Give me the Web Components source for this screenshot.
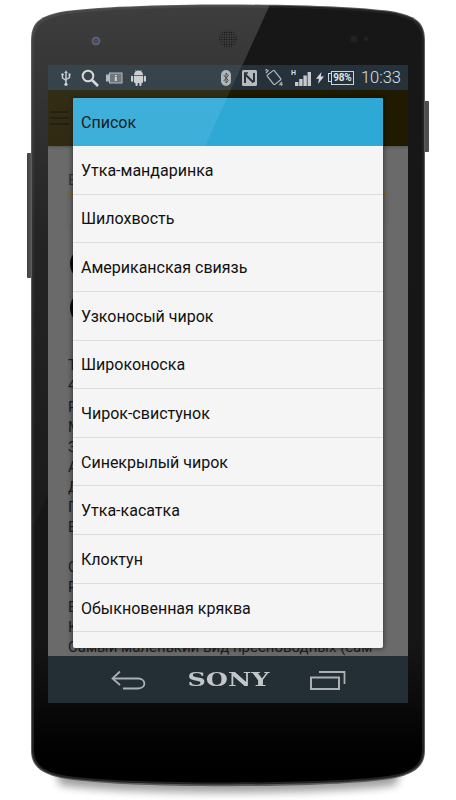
<!DOCTYPE html>
<html lang="ru">
<head>
<meta charset="utf-8">
<title>Список</title>
<style>
  html, body { margin: 0; background: #fff; }
  body { font-family: Roboto, "Liberation Sans", sans-serif; }
</style>
</head>
<body>

<phone-frame>
  <status-bar></status-bar>
  <app-page>
    <list-dialog title-text="Список">
      <list-item>Утка-мандаринка</list-item>
      <list-item>Шилохвость</list-item>
      <list-item>Американская свиязь</list-item>
      <list-item>Узконосый чирок</list-item>
      <list-item>Широконоска</list-item>
      <list-item>Чирок-свистунок</list-item>
      <list-item>Синекрылый чирок</list-item>
      <list-item>Утка-касатка</list-item>
      <list-item>Клоктун</list-item>
      <list-item>Обыкновенная кряква</list-item>
      <list-item></list-item>
    </list-dialog>
  </app-page>
  <nav-bar></nav-bar>
</phone-frame>

<script>
// Device body: drawn svg behind, glare svg in front, the screen sits in flow
class PhoneFrame extends HTMLElement {
  constructor() {
    super();
    this.attachShadow({ mode: 'open' }).innerHTML = `
    <style>
      :host { display: block; position: relative; width: 456px; height: 800px; overflow: hidden; }
      .body, .glare { position: absolute; left: 0; top: 0; }
      .glare { pointer-events: none; }
      .wrap { position: relative; box-sizing: border-box; height: 800px; padding: 65px 48px 0; }
      .screen { display: grid; grid-template-rows: 25px 566px 47px; width: 360px; height: 638px; overflow: hidden; }
    </style>
    <svg class="body" width="456" height="800" viewBox="0 0 456 800">
      <defs>
        <linearGradient id="fill" x1="0" y1="0" x2="0" y2="1">
          <stop offset="0" stop-color="#171717"/>
          <stop offset=".82" stop-color="#161616"/>
          <stop offset=".95" stop-color="#020202"/>
          <stop offset="1" stop-color="#000"/>
        </linearGradient>
        <linearGradient id="sheen" gradientUnits="userSpaceOnUse" x1="0" y1="0" x2="0" y2="520">
          <stop offset="0" stop-color="#fff" stop-opacity=".17"/>
          <stop offset=".45" stop-color="#fff" stop-opacity=".06"/>
          <stop offset="1" stop-color="#fff" stop-opacity=".02"/>
        </linearGradient>
        <linearGradient id="btn" x1="0" y1="0" x2="1" y2="0">
          <stop offset="0" stop-color="#3c3c3c"/>
          <stop offset="1" stop-color="#666"/>
        </linearGradient>
        <filter id="soft" x="-10%" y="-20%" width="120%" height="140%"><feGaussianBlur stdDeviation="4"/></filter>
        <clipPath id="shape"><path d="M32 42C32 24 39 18 60 13C120 3 336 3 396 13C417 18 424 24 424 42L424 750C424 765 415 772 395 777C340 787 116 787 61 777C41 772 32 765 32 750Z"/></clipPath>
        <radialGradient id="lens"><stop offset="0" stop-color="#4d68d0"/><stop offset=".4" stop-color="#333c5c"/><stop offset=".7" stop-color="#6b6b6b"/><stop offset="1" stop-color="#555"/></radialGradient>
        <pattern id="mesh" width="2.4" height="2.4" patternUnits="userSpaceOnUse"><circle cx="1.2" cy="1.2" r=".65" fill="#0d0d0d"/></pattern>
      </defs>
      <path d="M50 750L406 750L396 785C330 795 126 795 60 785Z" fill="#000" opacity=".38" filter="url(#soft)"/>
      <rect x="27" y="153" width="6" height="125" rx="1" fill="url(#btn)"/>
      <rect x="424" y="101" width="5" height="51" rx="1" fill="#4e4e4e"/>
      <path d="M31 42C31 23 38 17 60 12C120 2 336 2 396 12C418 17 425 23 425 42L425 750C425 766 416 773 395 778C340 789 116 789 61 778C40 773 31 766 31 750Z" fill="#5b5b5b"/>
      <path d="M32 42C32 24 39 18 60 13C120 3 336 3 396 13C417 18 424 24 424 42L424 750C424 765 415 772 395 777C340 787 116 787 61 777C41 772 32 765 32 750Z" fill="#232323"/>
      <path d="M34 43C34 26 41 20 61 15C120 5 336 5 395 15C415 20 422 26 422 43L422 750C422 763 414 771 394 775C340 785 116 785 62 775C42 771 34 763 34 750Z" fill="url(#fill)"/>
      <polygon points="31,0 272,0 0,600 31,600" fill="url(#sheen)" clip-path="url(#shape)"/>
      <circle cx="96" cy="41" r="4.5" fill="url(#lens)"/>
      <circle cx="228" cy="39" r="10" fill="#3a3a3a"/>
      <circle cx="228" cy="39" r="9" fill="url(#mesh)"/>
      <circle cx="354" cy="39" r="3.5" fill="#222"/>
      <circle cx="366" cy="39" r="2" fill="#242424"/>
    </svg>
    <div class="wrap"><div class="screen"><slot></slot></div></div>
    <svg class="glare" width="456" height="800" viewBox="0 0 456 800">
      <defs>
        <linearGradient id="g" gradientUnits="userSpaceOnUse" x1="0" y1="65" x2="0" y2="150">
          <stop offset="0" stop-color="#fff" stop-opacity=".09"/>
          <stop offset=".95" stop-color="#fff" stop-opacity=".07"/>
          <stop offset="1" stop-color="#fff" stop-opacity="0"/>
        </linearGradient>
      </defs>
      <polygon points="48,65 242,65 205,146 48,146" fill="url(#g)"/>
    </svg>`;
  }
}

// Top status bar with notification and system icons
class StatusBar extends HTMLElement {
  constructor() {
    super();
    this.attachShadow({ mode: 'open' }).innerHTML = `
    <style>
      :host { display: flex; align-items: center; justify-content: space-between; background: #25323b; color: #c9cdd0; height: 25px; padding: 0 7px 0 13px; box-sizing: border-box; }
      .group { display: flex; align-items: center; }
      svg { display: block; flex: none; }
      .net { display: flex; align-items: flex-start; width: 20px; height: 16px; }
      .h { font: 700 7px/7px Roboto, sans-serif; width: 5px; color: #d8dbdd; }
      .net svg { margin-left: -1px; }
      .battery { display: flex; align-items: center; margin-left: 4px; }
      .nub { width: 2px; height: 7px; border: 1px solid #cfd3d5; border-right: 0; }
      .cell { box-sizing: border-box; width: 23px; height: 14px; border: 1px solid #cfd3d5; font: 700 10px/12px Roboto, sans-serif; text-align: center; color: #dfe2e4; letter-spacing: -.2px; }
      .time { margin-left: 7px; font: 300 16.5px/25px Roboto, sans-serif; color: #dde0e2; }
    </style>
    <div class="group">
      <svg width="10" height="16" viewBox="0 0 10 16" fill="none" stroke="#c9cdd0" stroke-width="1.4"><path d="M5 2.5V15"/><path d="M5 0.5L6.8 3H3.2Z" fill="#c9cdd0" stroke="none"/><path d="M1.5 5V8L5 10.5M8.5 5V7.5L5 9.5"/><circle cx="1.5" cy="4.5" r="1.2" fill="#c9cdd0" stroke="none"/><rect x="7.5" y="3.5" width="2" height="2" fill="#c9cdd0" stroke="none"/><circle cx="5" cy="14.3" r="1.6" fill="#c9cdd0" stroke="none"/></svg>
      <svg style="margin-left:10px" width="18" height="18" viewBox="0 0 18 18" fill="none" stroke="#d3d6d8"><circle cx="7" cy="7" r="5.3" stroke-width="2"/><path d="M11 11L17 17" stroke-width="2.6"/></svg>
      <svg style="margin-left:6px" width="18" height="12" viewBox="0 0 18 12"><path d="M1 2.5H4V0.5H17.5V11.5H4V9.5H1Z" fill="#aeb3b6"/><rect x="5" y="1.5" width="11.500" height="9" fill="#606a70"/><rect x="9.8" y="3" width="2" height="1.4" fill="#ccd0d2"/><rect x="9.8" y="5" width="2" height="4" fill="#ccd0d2"/></svg>
      <svg style="margin-left:8px" width="15" height="17" viewBox="0 0 15 17" fill="#c8cbcd"><path d="M3 6A4.500 4.500 0 0 1 12 6Z"/><path d="M4.500 1.300L5.700 3M10.500 1.300L9.300 3" stroke="#c8cbcd" stroke-width=".8"/><path d="M3 6.800H12V13A1 1 0 0 1 11 14H4A1 1 0 0 1 3 13Z"/><rect x="0" y="6.800" width="2.200" height="6" rx="1.100"/><rect x="12.800" y="6.800" width="2.200" height="6" rx="1.100"/><rect x="4.500" y="13" width="2.200" height="4" rx="1.100"/><rect x="8.300" y="13" width="2.200" height="4" rx="1.100"/></svg>
    </div>
    <div class="group">
      <svg width="10" height="16" viewBox="0 0 10 16"><rect x="0" y="0" width="10" height="16" rx="5" fill="#a9aeb1"/><path d="M2.700 5L7.300 10.500L5 13V3L7.300 5.500L2.700 11" fill="none" stroke="#333c42" stroke-width="1"/></svg>
      <svg style="margin-left:11px" width="15" height="16" viewBox="0 0 15 16"><rect width="15" height="16" rx="1.500" fill="#b7bbbd"/><path d="M3 13V4.200L11.500 12.500M12 3V12" fill="none" stroke="#28333a" stroke-width="2"/><path d="M3 3H6" stroke="#28333a" stroke-width="1.500"/></svg>
      <svg style="margin-left:8px" width="18" height="17" viewBox="0 0 18 17" fill="none" stroke="#b4b9bc" stroke-width="1.200"><rect x="4.500" y="2.500" width="9" height="12" rx="1" transform="rotate(-38 9 8.500)"/><path d="M1 4L3.500 1M0.500 1.500L2 0M14.500 16L17 13M16 16.500L17.500 15"/></svg>
      <div class="net" style="margin-left:8px"><span class="h">H</span><svg width="16" height="14" viewBox="0 0 16 14" fill="#c6cacc" style="margin-top:2px"><rect x="0" y="10" width="3.400" height="4"/><rect x="4.200" y="7" width="3.400" height="7"/><rect x="8.400" y="3.500" width="3.400" height="10.500"/><rect x="12.600" y="0" width="3.400" height="14"/></svg></div>
      <svg style="margin-left:5px" width="8" height="12" viewBox="0 0 8 12" fill="#d4d7d9"><path d="M5.500 0L0 6.800H3L2 12L8 4.600H4.800Z"/></svg>
      <div class="battery"><span class="nub"></span><span class="cell">98%</span></div>
      <span class="time">10:33</span>
    </div>`;
  }
}

// The dimmed screen under the dialog, only its left edge shows
class AppPage extends HTMLElement {
  constructor() {
    super();
    this.attachShadow({ mode: 'open' }).innerHTML = `
    <style>
      :host { display: block; position: relative; height: 566px; overflow: hidden; background: #6a6a6a; color: #1d1d1d; font: 15px/20px Roboto, sans-serif; }
      .bar { height: 56px; display: flex; flex-direction: column; justify-content: center; gap: 4px; padding-left: 2px; background: #201a00; box-shadow: 0 1px 3px rgba(0,0,0,.25); box-sizing: border-box; }
      .bar i { display: block; width: 19px; height: 2px; background: #120e00; }
      .content { padding: 24px 20px 0; }
      .label { color: #333; }
      .input { box-sizing: border-box; height: 32px; width: 321px; margin: 4px 0 21px -1px; border: 1px solid #8a6414; }
      .avatar { width: 34px; height: 34px; border-radius: 50%; background: #0c0c0c; margin: 0 0 10px 2px; }
      .first { margin-top: 30px; }
      .tight { margin-top: 2px; }
      .para { margin-top: 20px; }
      .last { white-space: nowrap; }
      ::slotted(list-dialog) { position: absolute; left: 25px; top: 8px; }
    </style>
    <div class="bar"><i></i><i></i><i></i></div>
    <div class="content">
      <div class="label">В</div>
      <div class="input"></div>
      <div class="avatar"></div>
      <div class="avatar"></div>
      <div class="first"><div>Т</div><div>4</div></div>
      <div class="tight">
        <div>Р</div>
        <div>М</div>
        <div>З</div>
        <div>А</div>
        <div>Д</div>
        <div>П</div>
        <div>В</div>
      </div>
      <div class="para">
        <div>С</div>
        <div>Р</div>
        <div>Е</div>
        <div>К</div>
        <div class="last">Самый маленький вид пресноводных (сам</div>
      </div>
    </div>
    <slot></slot>`;
  }
}

// Selection dialog: coloured title and a list of slotted rows
class ListDialog extends HTMLElement {
  constructor() {
    super();
    this.attachShadow({ mode: 'open' }).innerHTML = `
    <style>
      :host { display: block; width: 310px; height: 550px; background: #f5f5f5; border-radius: 2px; overflow: hidden; box-shadow: 0 0 5px 1px rgba(0,0,0,.45); }
      .title { height: 48px; display: flex; align-items: center; padding-left: 8px; background: #2ea9d6; color: #04090c; font: 16px Roboto, sans-serif; }
    </style>
    <div class="title"></div>
    <slot></slot>`;
    this.shadowRoot.querySelector('.title').textContent = this.getAttribute('title-text');
  }
}

class ListItem extends HTMLElement {
  constructor() {
    super();
    this.attachShadow({ mode: 'open' }).innerHTML = `
    <style>
      :host { display: flex; align-items: center; box-sizing: border-box; height: 48.65px; padding: 1px 0 0 8px; border-bottom: 1px solid #dcdcdc; color: #111; font: 16px Roboto, sans-serif; white-space: nowrap; }
    </style>
    <slot></slot>`;
  }
}

// Bottom navigation with back, logo and recents
class NavBar extends HTMLElement {
  constructor() {
    super();
    this.attachShadow({ mode: 'open' }).innerHTML = `
    <style>
      :host { display: flex; align-items: center; justify-content: space-between; height: 47px; box-sizing: border-box; padding: 0 62px 0 63px; background: #242e35; }
      svg { display: block; }
      .logo { width: 81px; text-align: center; color: #c3c7ca; font: 700 19px/1 "DejaVu Serif", "Liberation Serif", serif; transform: scaleX(1.34); transform-origin: center; margin-top: -1px; }
    </style>
    <svg width="35" height="20" viewBox="0 0 35 20" fill="none" stroke="#aab0b4" stroke-width="1.800"><path d="M9 1.500L1.500 8.500L9 15"/><path d="M2 8.500H27C35.500 8.500 35.500 18.500 27 18.500H12"/></svg>
    <span class="logo">SONY</span>
    <svg width="36" height="20" viewBox="0 0 36 20" fill="none" stroke="#aab0b4" stroke-width="2"><rect x="1" y="7.500" width="28" height="11.500"/><path d="M9 2H34.500V14" stroke-width="1.800"/></svg>`;
  }
}

customElements.define('phone-frame', PhoneFrame);
customElements.define('status-bar', StatusBar);
customElements.define('app-page', AppPage);
customElements.define('list-dialog', ListDialog);
customElements.define('list-item', ListItem);
customElements.define('nav-bar', NavBar);
</script>
</body>
</html>
